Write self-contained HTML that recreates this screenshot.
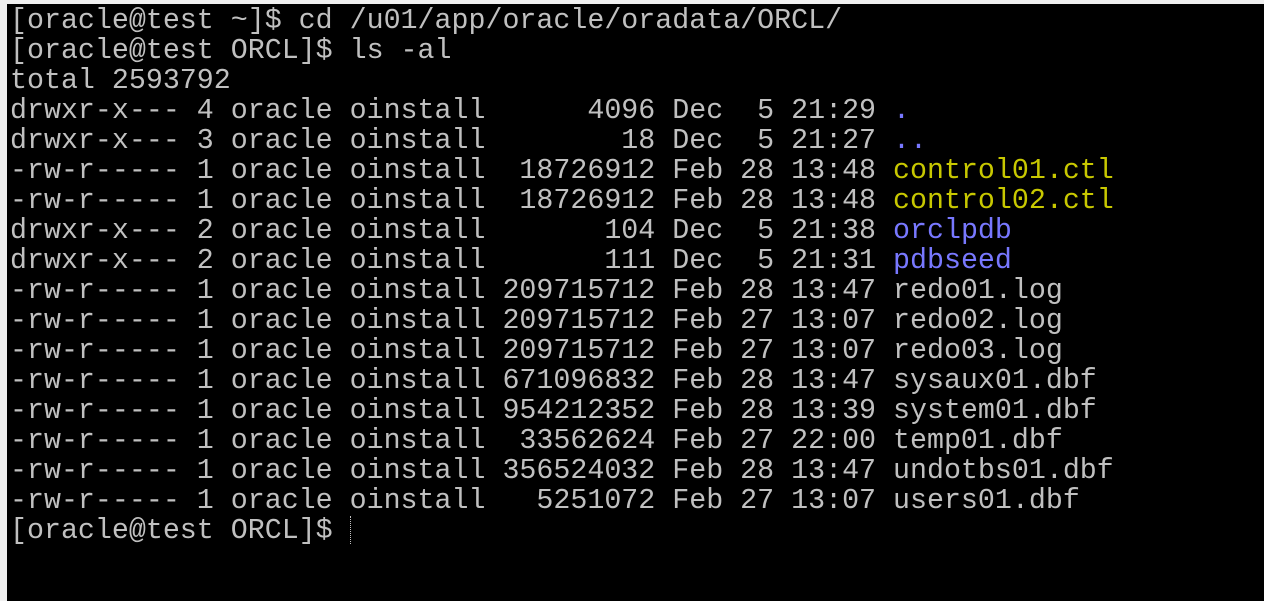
<!DOCTYPE html>
<html><head><style>
html,body{margin:0;padding:0;}
body{width:1264px;height:601px;background:#f0f0f0;position:relative;overflow:hidden;}
#t{position:absolute;left:7px;top:4px;right:0;bottom:0;background:#000;}
pre{position:absolute;left:3px;top:2px;margin:0;font-family:"Liberation Mono",monospace;font-size:28.3px;line-height:30px;color:#c0c0c0;white-space:pre;}
.b{color:#7878ff}.y{color:#c8c800}
.cur{display:inline-block;width:2px;height:28px;border-left:1px dotted #c0c0c0;vertical-align:-6px;}
</style></head><body><div id="t"><pre>[oracle@test ~]$ cd /u01/app/oracle/oradata/ORCL/
[oracle@test ORCL]$ ls -al
total 2593792
drwxr-x--- 4 oracle oinstall      4096 Dec  5 21:29 <span class="b">.</span>
drwxr-x--- 3 oracle oinstall        18 Dec  5 21:27 <span class="b">..</span>
-rw-r----- 1 oracle oinstall  18726912 Feb 28 13:48 <span class="y">control01.ctl</span>
-rw-r----- 1 oracle oinstall  18726912 Feb 28 13:48 <span class="y">control02.ctl</span>
drwxr-x--- 2 oracle oinstall       104 Dec  5 21:38 <span class="b">orclpdb</span>
drwxr-x--- 2 oracle oinstall       111 Dec  5 21:31 <span class="b">pdbseed</span>
-rw-r----- 1 oracle oinstall 209715712 Feb 28 13:47 redo01.log
-rw-r----- 1 oracle oinstall 209715712 Feb 27 13:07 redo02.log
-rw-r----- 1 oracle oinstall 209715712 Feb 27 13:07 redo03.log
-rw-r----- 1 oracle oinstall 671096832 Feb 28 13:47 sysaux01.dbf
-rw-r----- 1 oracle oinstall 954212352 Feb 28 13:39 system01.dbf
-rw-r----- 1 oracle oinstall  33562624 Feb 27 22:00 temp01.dbf
-rw-r----- 1 oracle oinstall 356524032 Feb 28 13:47 undotbs01.dbf
-rw-r----- 1 oracle oinstall   5251072 Feb 27 13:07 users01.dbf
[oracle@test ORCL]$ <span class="cur"></span></pre></div></body></html>
